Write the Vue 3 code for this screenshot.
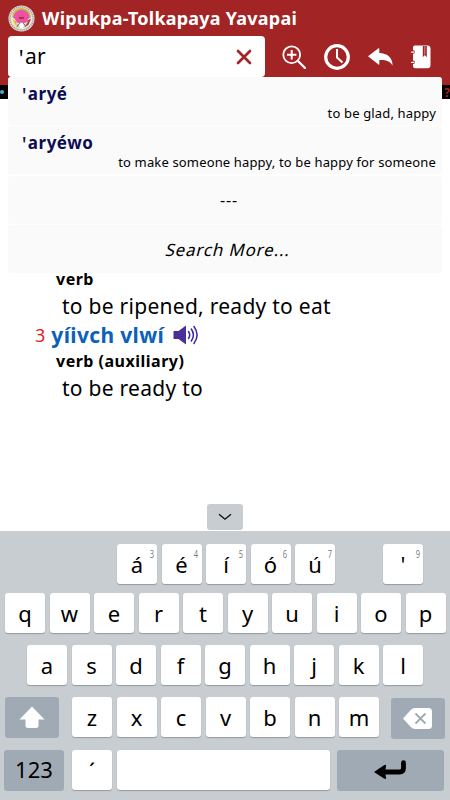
<template>
  <div class="app">
    <!-- app bar -->
    <header class="app-bar">
      <div class="title-row">
        <svg class="logo" viewBox="0 0 28 28">
          <circle cx="14" cy="14" r="13.5" fill="#e8e3dc" />
          <circle cx="14" cy="14" r="12" fill="none" stroke="#8c8580" stroke-width="1.6" stroke-dasharray="1 1.2" />
          <circle cx="14" cy="14" r="10.3" fill="#f3eee9" />
          <path d="M4.5 13a9.5 9.5 0 0 1 19 0l-2.5 1a7.3 7.3 0 0 0-14 0z" fill="#55b3a8" />
          <path d="M5.5 12a8.5 8 0 0 1 17 0" fill="none" stroke="#e9a33b" stroke-width="2" />
          <path d="M6 13a8 7.5 0 0 1 16 0l-4 6h-8z" fill="#ef4fa5" />
          <path d="M4 14l4 2 2 6-3-1z" fill="#f2d534" />
          <path d="M24 14l-4 2-2 6 3-1z" fill="#c92c35" />
          <path d="M11 12.5h6l-1 2h-4z" fill="#a53b35" />
          <path d="M7 17l5 2 2-1 2 1 5-2-4 6h-6z" fill="#eee9e4" stroke="#918783" stroke-width=".6" />
          <path d="M12 19h4v5h-4z" fill="#fff" />
          <path d="M9 23l3-4M19 23l-3-4" stroke="#685b55" stroke-width="1" />
        </svg>
        <h1 class="title">Wipukpa-Tolkapaya Yavapai</h1>
      </div>
      <div class="tool-row">
        <div class="search-box">
          <span class="query"><span class="glottal">ꞌ</span>{{ query }}</span>
          <svg class="clear" width="16" height="16" viewBox="0 0 16 16" @click="query = ''">
            <path d="M2 2L14 14M14 2L2 14" stroke="#a32424" stroke-width="2.7" stroke-linecap="round" />
          </svg>
        </div>
        <div class="tools">
          <svg width="24" height="24" viewBox="0 0 24 24" fill="none" stroke="#fff">
            <circle cx="9.7" cy="9.7" r="8.4" stroke-width="1.8" />
            <path d="M9.7 5v9.4M5 9.7h9.4" stroke-width="2" />
            <path d="M16 16l7 7" stroke-width="2.3" stroke-linecap="round" />
          </svg>
          <svg width="26" height="26" viewBox="0 0 26 26" fill="none" stroke="#fff">
            <circle cx="13" cy="13" r="11.3" stroke-width="3.2" />
            <path d="M13 5v8.5l5.5 5" stroke-width="2" />
          </svg>
          <svg width="25" height="18" viewBox="0 0 25 18" fill="#fff">
            <path d="M0 8.3L10.5.3Q11.3-.2 11.3.8V5C19 5.3 24.5 9 24.6 17.6C22 13 18 11.7 11.3 12v4Q11.3 17 10.5 16.4z" />
          </svg>
          <svg width="20" height="24" viewBox="0 0 20 24">
            <path d="M3.8.5H16.500a3 3 0 0 1 3 3v16.800a3 3 0 0 1-3 3H4.500a2.500 2.500 0 0 1-2.500-2.500V2.500a2 2 0 0 1 1.800-2z" fill="#fff" />
            <path d="M11.800 1h4v11.300l-2-2.200-2 2.200z" fill="#a32424" />
            <path d="M13.800 1v8.500" stroke="#fff" stroke-width=".5" />
            <g fill="#a32424">
              <circle cx="2.300" cy="7" r="1.700" />
              <circle cx="2.300" cy="17.300" r="1.700" />
            </g>
            <path d="M.6 7.100h2.400M.6 17.300h2.400" stroke="#fff" stroke-width="1.300" stroke-linecap="round" />
          </svg>
        </div>
      </div>

      <!-- suggestions -->
      <ul class="suggestions">
        <li v-for="item in suggestions" :key="item.word" class="suggestion">
          <span class="word"><span class="glottal">ꞌ</span>{{ item.word }}</span>
          <span class="gloss">{{ item.gloss }}</span>
        </li>
        <li class="suggestion centered">---</li>
        <li class="suggestion centered more"><span>Search More...</span></li>
      </ul>
    </header>

    <div class="banner">
      <span class="star"></span>
      <span class="banner-mark">?</span>
    </div>

    <!-- dictionary entries -->
    <main class="entries">
      <p class="pos">verb</p>
      <p class="definition">to be ripened, ready to eat</p>
      <p class="headword">
        <span class="number">3</span>
        <b>yíivch vlwí</b>
        <svg width="26" height="20" viewBox="0 0 26 20">
          <path d="M.5 6h5L13 .5v19L5.500 14h-5z" fill="#4a2f96" />
          <path d="M15.500 6.500q2.400 3.500 0 7M18.300 4q4.200 6 0 12M21 1.500q6.200 8.500 0 17" fill="none" stroke="#3726a5" stroke-width="1.5" stroke-linecap="round" />
        </svg>
      </p>
      <p class="pos">verb (auxiliary)</p>
      <p class="definition">to be ready to</p>
    </main>

    <!-- keyboard -->
    <section class="keyboard">
      <div class="collapse">
        <svg width="14" height="8" viewBox="0 0 14 8">
          <path d="M1 1.200l6 5 6-5" fill="none" stroke="#111" stroke-width="1.4" />
        </svg>
      </div>
      <div class="key-row accents">
        <div v-for="key in accents" :key="key.char" class="key">
          {{ key.char }}<sup class="hint">{{ key.hint }}</sup>
        </div>
        <div class="key apostrophe">'<sup class="hint">9</sup></div>
      </div>
      <div class="key-row top">
        <div v-for="key in 'qwertyuiop'" :key="key" class="key">{{ key }}</div>
      </div>
      <div class="key-row home">
        <div v-for="key in 'asdfghjkl'" :key="key" class="key">{{ key }}</div>
      </div>
      <div class="key-row bottom">
        <div class="key special shift">
          <svg width="26" height="23" viewBox="0 0 26 23">
            <path d="M13 .5L25.5 13.500H19.500V19.500a2.500 2.500 0 0 1-2.500 2.500H9a2.500 2.500 0 0 1-2.500-2.500V13.500H.5z" fill="#fff" />
          </svg>
        </div>
        <div v-for="key in 'zxcvbnm'" :key="key" class="key">{{ key }}</div>
        <div class="key special backspace">
          <svg width="29" height="21" viewBox="0 0 29 21">
            <path d="M0 10.500L8 1.800Q9.500 0 12 0H25.500a3.500 3.500 0 0 1 3.500 3.500v14a3.500 3.500 0 0 1-3.500 3.500H12Q9.500 21 8 19.200z" fill="#fff" />
            <path d="M12.500 5.500l10 10M22.500 5.500l-10 10" stroke="#a0aab4" stroke-width="1.8" />
          </svg>
        </div>
      </div>
      <div class="key-row last">
        <div class="key special numbers">123</div>
        <div class="key acute">´</div>
        <div class="key space"></div>
        <div class="key special enter">
          <svg width="33" height="19" viewBox="0 0 33 19">
            <path d="M29.500 2.700V8q0 4-4 4H9" fill="none" stroke="#000" stroke-width="4.8" stroke-linecap="round" />
            <path d="M0 12L10 5.200Q12.500 4 12 6.500L11 12l1 5.500q.5 2.300-2 1z" fill="#000" />
          </svg>
        </div>
      </div>
    </section>
  </div>
</template>

<script setup>
import { ref } from 'vue'

// every word here starts with a glottal stop, drawn apart in the template
const query = ref('ar')

const suggestions = [
  { word: 'aryé', gloss: 'to be glad, happy' },
  { word: 'aryéwo', gloss: 'to make someone happy, to be happy for someone' }
]

const accents = [
  { char: 'á', hint: 3 },
  { char: 'é', hint: 4 },
  { char: 'í', hint: 5 },
  { char: 'ó', hint: 6 },
  { char: 'ú', hint: 7 }
]
</script>

<style>
body {
  margin: 0;
}
</style>

<style scoped>
.app {
  width: 450px;
  height: 800px;
  display: flex;
  flex-direction: column;
  overflow: hidden;
  background: #fff;
  color: #000;
  font-family: "Noto Sans", sans-serif;
}

.app-bar {
  position: relative;
  flex: none;
  height: 85px;
  background: #a32424;
}

.title-row {
  display: flex;
  align-items: center;
  height: 36px;
  padding-left: 8px;
}

.logo {
  width: 27px;
  height: 27px;
}

.title {
  margin: 0 0 0 7px;
  color: #fff;
  font-size: 18px;
  line-height: 36px;
  font-weight: bold;
  letter-spacing: 0.22px;
  white-space: nowrap;
}

.tool-row {
  display: flex;
  padding-left: 8px;
}

.search-box {
  box-sizing: border-box;
  width: 257px;
  height: 41px;
  padding: 0 13px 0 10.5px;
  display: flex;
  align-items: center;
  justify-content: space-between;
  background: #fff;
  border-radius: 4px;
}

.query {
  padding-bottom: 2px;
  font-size: 21px;
  letter-spacing: 0.2px;
}

.glottal {
  margin-right: 1px;
  font-size: 0.95em;
  font-weight: normal;
}

.word .glottal {
  font-weight: 600;
}

.tools {
  flex: 1;
  display: flex;
  align-items: center;
  justify-content: space-between;
  padding: 0 18.5px 0 16.5px;
}

.suggestions {
  position: absolute;
  top: 77px;
  left: 8px;
  width: 434px;
  margin: 0;
  padding: 0;
  list-style: none;
  background: #fff;
  border-radius: 4px;
  z-index: 2;
}

.suggestion {
  box-sizing: border-box;
  height: 48px;
  margin-bottom: 1.3px;
  padding: 6px 6px 0 14px;
  display: flex;
  flex-direction: column;
  background: #fafafa;
  border-radius: 3px;
}

.suggestion:last-child {
  margin-bottom: 0;
}

.word {
  color: #0c0c55;
  font-size: 17px;
  line-height: 22px;
  font-weight: bold;
  letter-spacing: 0.5px;
}

.gloss {
  align-self: flex-end;
  font-size: 13px;
  line-height: 16px;
  letter-spacing: 0.15px;
}

.centered {
  padding: 0 0 0 8px;
  align-items: center;
  justify-content: center;
  font-size: 16px;
  letter-spacing: 0.8px;
}

.more {
  padding-top: 2px;
  font-size: 17px;
}

/* slanted upright letters, not the true italic face */
.more span {
  transform: skewX(-14deg);
}

.banner {
  flex: none;
  height: 14px;
  display: flex;
  align-items: center;
  justify-content: space-between;
  background: #000;
}

.star {
  width: 4px;
  height: 4px;
  border-radius: 50%;
  background: #4aa8d8;
}

.banner-mark {
  color: #a32424;
  font-size: 12px;
  font-weight: bold;
}

.entries {
  padding: 167px 0 0 35px;
}

.entries p {
  margin: 0;
  white-space: nowrap;
}

.pos {
  padding-left: 21px;
  font-size: 16px;
  line-height: 26px;
  font-weight: bold;
  letter-spacing: 0.5px;
}

.definition {
  padding-left: 27px;
  font-size: 21px;
  line-height: 28px;
  letter-spacing: 0.27px;
}

.headword {
  box-sizing: border-box;
  height: 28px;
  padding-top: 1px;
  display: flex;
  align-items: center;
  font-size: 21px;
  line-height: 28px;
}

.headword b {
  margin: 0 9px 0 6px;
  color: #0b62b8;
  letter-spacing: 0.35px;
}

.number {
  color: #e01b1b;
  font-size: 18px;
}

.keyboard {
  position: relative;
  box-sizing: border-box;
  flex: none;
  height: 269px;
  margin-top: auto;
  padding: 13px 5px 0;
  background: #c8cdd1;
}

.collapse {
  position: absolute;
  top: -27px;
  left: 207px;
  width: 36px;
  height: 26px;
  display: flex;
  align-items: center;
  justify-content: center;
  background: #c8cdd1;
  border-radius: 3px;
}

.key-row {
  display: flex;
  gap: 4.5px;
}

.key {
  position: relative;
  box-sizing: border-box;
  flex: none;
  width: 40px;
  height: 40px;
  display: flex;
  align-items: center;
  justify-content: center;
  background: #fff;
  border-radius: 3px;
  box-shadow: 0 1px 1px #959ba0;
  font-size: 22px;
  line-height: 40px;
}

.hint {
  position: absolute;
  top: 4px;
  right: 2.5px;
  color: #777;
  font-family: "Open Sans", sans-serif;
  font-size: 10px;
  line-height: 12px;
  transform: scaleX(0.75);
}

.accents {
  padding-left: 112px;
}

.apostrophe {
  margin-left: 43.5px;
}

.top {
  margin-top: 9px;
}

.home {
  margin-top: 12px;
  padding-left: 22px;
}

.bottom {
  margin-top: 12px;
}

.last {
  margin-top: 11.5px;
}

.special {
  background: #a0aab4;
  box-shadow: none;
  height: 41px;
}

.shift {
  width: 53.5px;
  margin-right: 9px;
}

.backspace {
  width: 53.5px;
  margin: 0.5px 0 0 7.5px;
}

.numbers {
  width: 60px;
  margin-left: -1px;
  margin-right: 3.5px;
  padding-bottom: 3px;
}

.space {
  width: 213px;
}

.enter {
  width: 107.5px;
  margin-left: 2.5px;
  padding-bottom: 3px;
}
</style>
